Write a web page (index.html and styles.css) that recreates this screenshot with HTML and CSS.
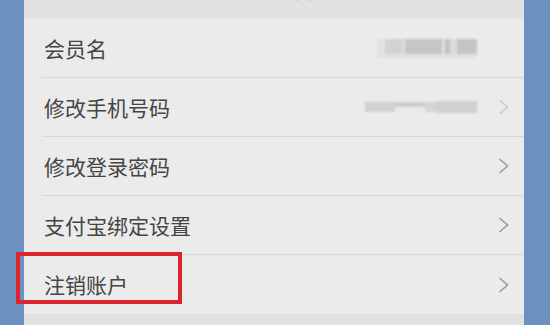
FILE: index.html
```html
<!DOCTYPE html>
<html lang="zh">
<head>
<meta charset="utf-8">
<link rel="stylesheet" href="styles.css">
</head>
<body>
<div class="phone">
  <div class="header">
    <div class="header-inner">
      <span class="back">&lt;</span>
      <span class="title">账户设置</span>
    </div>
  </div>
  <div class="list">
    <div class="row">
      <span class="label">会员名</span>
      <span class="blur blur-a">
        <i class="b1"></i><i class="b2"></i><i class="gap3"></i><i class="b4"></i><i class="gap3"></i><i class="b6"></i><i class="gap7"></i><i class="b7"></i>
      </span>
    </div>
    <div class="row">
      <span class="label">修改手机号码</span>
      <span class="blur blur-b">
        <i class="c1"></i><i class="c2"></i><i class="c3"></i><i class="c4"></i>
      </span>
      <span class="chev faint"><svg width="12" height="16" viewBox="0 0 12 16"><path d="M2 1.5 L9.5 8 L2 14.5" fill="none" stroke="#cfcfcf" stroke-width="2"/></svg></span>
    </div>
    <div class="row">
      <span class="label">修改登录密码</span>
      <span class="chev"><svg width="12" height="16" viewBox="0 0 12 16"><path d="M1.5 1 L9.5 8 L1.5 15" fill="none" stroke="#9a9a9a" stroke-width="1.6"/></svg></span>
    </div>
    <div class="row">
      <span class="label">支付宝绑定设置</span>
      <span class="chev"><svg width="12" height="16" viewBox="0 0 12 16"><path d="M1.5 1 L9.5 8 L1.5 15" fill="none" stroke="#9a9a9a" stroke-width="1.6"/></svg></span>
    </div>
    <div class="row last">
      <span class="label">注销账户</span>
      <span class="chev"><svg width="12" height="16" viewBox="0 0 12 16"><path d="M1.5 1 L9.5 8 L1.5 15" fill="none" stroke="#9a9a9a" stroke-width="1.6"/></svg></span>
      <span class="mark"></span>
    </div>
  </div>
  <div class="footer"></div>
</div>
</body>
</html>
```
FILE: styles.css
```css
html, body {
  margin: 0;
  padding: 0;
  height: 100%;
  overflow: hidden;
}
body {
  background: #6d91bf;
  font-family: "Noto Sans CJK SC", "Noto Sans", sans-serif;
}
.phone {
  margin: 0 26px 0 24px;
  height: 325px;
  background: #ebebeb;
  display: flex;
  flex-direction: column;
}
.header {
  height: 19px;
  background: #e2e2e2;
  overflow: hidden;
  flex: none;
}
.header-inner {
  height: 30px;
  margin-top: -27px;
  display: flex;
  align-items: flex-end;
  color: #777;
  font-size: 24px;
  line-height: 30px;
}
.back {
  margin-left: 24px;
  font-size: 22px;
}
.title {
  margin-left: 164px;
  letter-spacing: 8px;
  color: #888;
}
.list {
  flex: none;
}
.row {
  position: relative;
  height: 58px;
  display: flex;
  align-items: center;
  padding: 0 14px 0 2px;
  margin-left: 18px;
  border-bottom: 1px solid #d7d7d7;
}
.row.last {
  border-bottom: none;
  height: 59px;
}
.label {
  font-size: 21px;
  color: #454545;
  flex: 1;
  line-height: 1;
}
.blur {
  display: flex;
  align-items: center;
  filter: blur(1px);
}
.blur i {
  display: block;
}
.blur-a {
  margin-right: 33px;
  width: 100px;
  height: 20px;
  align-items: flex-start;
  padding-top: 1px;
  box-sizing: border-box;
  border-bottom: 4px solid #e2e2e2;
}
.blur-a i { height: 15px; }
.b1 { width: 8px; background: #e2e2e2; }
.b2 { width: 17px; background: #d2d2d2; }
.gap3 { width: 3px; background: #dedede; }
.b4 { width: 37px; background: #c6c6c6; }
.b6 { width: 5px; background: #c2c2c2; }
.gap7 { width: 7px; background: #dcdcdc; }
.b7 { width: 20px; background: #c4c4c4; }
.blur-b {
  margin-right: 21px;
  width: 112px;
  height: 14px;
}
.c1 { width: 30px; height: 10px; background: #d2d2d2; }
.c2 { width: 30px; height: 5px; background: #cdcdcd; align-self: flex-start; margin-top: 2px; }
.c3 { width: 12px; height: 10px; background: #d4d4d4; }
.c4 { width: 40px; height: 12px; background: #d0d0d0; }
.chev {
  display: flex;
  width: 12px;
  height: 16px;
}
.mark {
  position: absolute;
  left: -26px;
  top: -3px;
  width: 158px;
  height: 44px;
  border: 4px solid #dc2430;
}
.footer {
  flex: 1;
  background: #e1e1e1;
}
```
